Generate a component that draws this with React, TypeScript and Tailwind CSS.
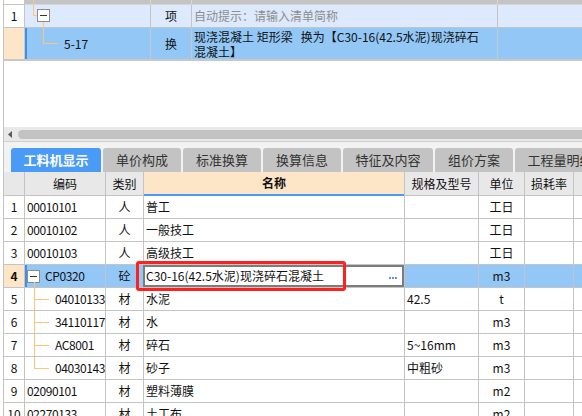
import React from 'react'

const line = 'border-[#c4c4c4]'

function MinusBox() {
  return (
    <span className="flex h-[13px] w-[13px] items-center justify-center border border-[#8c8c8c] bg-white">
      <span className="h-px w-[7px] bg-[#333]"></span>
    </span>
  )
}

type Row = {
  no: string
  code: string
  type: string
  name: string
  spec: string
  unit: string
  level: 0 | 1 | 2
  tree?: 'mid' | 'last'
}

const rows: Row[] = [
  { no: '1', code: '00010101', type: '人', name: '普工', spec: '', unit: '工日', level: 0 },
  { no: '2', code: '00010102', type: '人', name: '一般技工', spec: '', unit: '工日', level: 0 },
  { no: '3', code: '00010103', type: '人', name: '高级技工', spec: '', unit: '工日', level: 0 },
  { no: '4', code: 'CP0320', type: '砼', name: 'C30-16(42.5水泥)现浇碎石混凝土', spec: '', unit: 'm3', level: 1 },
  { no: '5', code: '04010133', type: '材', name: '水泥', spec: '42.5', unit: 't', level: 2, tree: 'mid' },
  { no: '6', code: '34110117', type: '材', name: '水', spec: '', unit: 'm3', level: 2, tree: 'mid' },
  { no: '7', code: 'AC8001', type: '材', name: '碎石', spec: '5~16mm', unit: 'm3', level: 2, tree: 'mid' },
  { no: '8', code: '04030143', type: '材', name: '砂子', spec: '中粗砂', unit: 'm3', level: 2, tree: 'last' },
  { no: '9', code: '02090101', type: '材', name: '塑料薄膜', spec: '', unit: 'm2', level: 0 },
  { no: '10', code: '02270133', type: '材', name: '土工布', spec: '', unit: 'm2', level: 0 },
]

const tabs = [
  { label: '工料机显示', w: 'w-[90px]' },
  { label: '单价构成', w: 'w-[78px]' },
  { label: '标准换算', w: 'w-[78px]' },
  { label: '换算信息', w: 'w-[78px]' },
  { label: '特征及内容', w: 'w-[90px]' },
  { label: '组价方案', w: 'w-[78px]' },
  { label: '工程量明细', w: 'w-[90px]' },
]

const cols = 'grid grid-cols-[21px_81px_38px_260px_75px_46px_49px_1fr]'

export default function App() {
  return (
    <div className="relative h-[416px] w-[582px] overflow-hidden bg-white font-['Noto_Sans_CJK_SC',sans-serif] text-[12px] text-[#111]">
      <div className={`ml-[3px] min-h-[416px] border-l ${line}`}>
        {/* upper grid */}
        <div className="grid grid-cols-[21px_126px_41px_306px_1fr]">
          {/* clipped row above */}
          <div className={`h-[5px] border-r border-b ${line} bg-white`}></div>
          <div className="relative h-[5px] border-r border-b border-[#d6d6d6] bg-[#c4c4c4]">
            <span className="absolute left-[8px] top-0 h-full w-px bg-[#fbc57d]"></span>
          </div>
          <div className="h-[5px] border-r border-b border-[#d6d6d6] bg-[#c4c4c4]"></div>
          <div className="h-[5px] border-r border-b border-[#d6d6d6] bg-[#c4c4c4]"></div>
          <div className="h-[5px] border-b border-[#d6d6d6] bg-[#c4c4c4]"></div>

          {/* row 1 */}
          <div className={`flex h-[23px] items-center justify-center border-r border-b ${line} bg-white`}>1</div>
          <div className={`relative h-[23px] border-r border-b ${line} bg-[#dde9fc]`}>
            <span className="absolute left-[8px] top-0 h-[10px] w-px bg-[#fbc57d]"></span>
            <span className="absolute left-[8px] top-[10px] h-px w-[4px] bg-[#fbc57d]"></span>
            <span className="absolute left-[12px] top-[4px]">
              <MinusBox />
            </span>
            <span className="absolute left-[18px] top-[17px] h-[6px] w-px bg-[#fbc57d]"></span>
          </div>
          <div className={`flex h-[23px] items-center justify-center border-r border-b ${line} bg-[#dde9fc]`}>项</div>
          <div className={`flex h-[23px] items-center border-r border-b ${line} bg-[#dde9fc] pl-[2px] text-[#8e8e8e]`}>
            自动提示：请输入清单简称
          </div>
          <div className={`h-[23px] border-b ${line} bg-[#dde9fc]`}></div>

          {/* row 2 */}
          <div className="h-[33px] border-r border-b-2 border-[#c8c8c8] bg-[#fde6c8]"></div>
          <div className="relative flex h-[33px] items-center border-r border-b-2 border-[#c8c8c8] bg-[#92c7f6] pl-[39px]">
            <span className="absolute left-0 top-0 h-full w-[2px] bg-[#3b8ef2]"></span>
            <span className="absolute left-[18px] top-0 h-[15px] w-px bg-[#fbc57d]"></span>
            <span className="absolute left-[18px] top-[15px] h-px w-[15px] bg-[#fbc57d]"></span>
            5-17
          </div>
          <div className="flex h-[33px] items-center justify-center border-r border-b-2 border-[#c8c8c8] bg-[#92c7f6]">换</div>
          <div className="flex h-[33px] flex-col justify-center border-r border-b-2 border-[#c8c8c8] bg-[#92c7f6] pl-[2px] leading-[15px] whitespace-pre">
            <span>现浇混凝土 矩形梁   换为【C30-16(42.5水泥)现浇碎石</span>
            <span>混凝土】</span>
          </div>
          <div className="h-[33px] border-b-2 border-[#c8c8c8] bg-[#92c7f6]"></div>
        </div>

        {/* empty area */}
        <div className="h-[66px] bg-white"></div>

        {/* horizontal scrollbar */}
        <div className="flex h-[14px] items-center bg-[#e8e8e8] pl-[4px]">
          <svg width="5" height="7" viewBox="0 0 5 7" className="mr-[5px]">
            <path d="M4 0 L0 3.5 L4 7 Z" fill="#5a5a5a" />
          </svg>
          <div className="h-[9px] flex-1 rounded-l-full bg-[#c2c2c2]"></div>
        </div>

        {/* tabs */}
        <div className="flex gap-[2px] border-t border-[#cfcfcf] bg-[#f2f2f2] pl-[7px] pt-[6px]">
          {tabs.map((t, i) => (
            <div
              key={t.label}
              className={`flex h-[24px] shrink-0 items-center justify-center rounded-t-[3px] text-[13px] ${t.w} ${
                i === 0 ? 'bg-[#4a9bf7] font-bold text-white' : 'bg-[#c3c3c3] text-[#333]'
              }`}
            >
              {t.label}
            </div>
          ))}
        </div>

        {/* lower grid */}
        <div className={cols}>
          <div className={`h-[24px] border-r border-b ${line} bg-[#e8e8e8]`}></div>
          <div className={`flex h-[24px] items-center justify-center border-r border-b ${line} bg-[#e8e8e8]`}>编码</div>
          <div className={`flex h-[24px] items-center justify-center border-r border-b ${line} bg-[#e8e8e8]`}>类别</div>
          <div className="flex h-[24px] items-center justify-center border-b-2 border-[#4a9bf7] bg-[#fde6c8] font-bold">名称</div>
          <div className={`flex h-[24px] items-center justify-center border-x border-b ${line} bg-[#e8e8e8]`}>规格及型号</div>
          <div className={`flex h-[24px] items-center justify-center border-r border-b ${line} bg-[#e8e8e8]`}>单位</div>
          <div className={`flex h-[24px] items-center justify-center border-r border-b ${line} bg-[#e8e8e8]`}>损耗率</div>
          <div className={`h-[24px] border-b ${line} bg-[#e8e8e8]`}></div>

          {rows.map((r) => {
            const sel = r.no === '4'
            const bg = sel ? 'bg-[#92c7f6]' : 'bg-white'
            return (
              <React.Fragment key={r.no}>
                <div
                  className={`flex h-[23px] items-center justify-center border-r border-b ${line} ${
                    sel ? 'bg-[#fde6c8] font-bold' : 'bg-white'
                  }`}
                >
                  {r.no}
                </div>
                <div className={`relative flex h-[23px] items-center overflow-hidden border-r border-b ${line} ${bg} tracking-[-0.4px] ${r.level === 2 ? 'pl-[30px]' : 'pl-[2px]'}`}>
                  {sel && <span className="absolute left-0 top-0 h-full w-[2px] bg-[#3b8ef2]"></span>}
                  {r.level === 1 && (
                    <>
                      <span className="mr-[5px]">
                        <MinusBox />
                      </span>
                      <span className="absolute left-[9px] top-[17px] h-[6px] w-px bg-[#fbc57d]"></span>
                    </>
                  )}
                  {r.level === 2 && (
                    <>
                      <span className={`absolute left-[9px] top-0 w-px bg-[#fbc57d] ${r.tree === 'last' ? 'h-[12px]' : 'h-full'}`}></span>
                      <span className="absolute left-[9px] top-[11px] h-px w-[15px] bg-[#fbc57d]"></span>
                    </>
                  )}
                  {r.code}
                </div>
                <div className={`flex h-[23px] items-center justify-center border-r border-b ${line} ${bg}`}>{r.type}</div>
                {sel ? (
                  <div className={`h-[23px] border-b ${line} ${bg}`}>
                    <div className="-ml-px flex h-full items-center justify-between border-2 border-[#7c7c7c] bg-white pl-[1px] pr-[5px]">
                      <span>{r.name}</span>
                      <span className="mt-[4px] flex gap-[1px]">
                        <span className="h-[2px] w-[2px] bg-[#5b93d3]"></span>
                        <span className="h-[2px] w-[2px] bg-[#5b93d3]"></span>
                        <span className="h-[2px] w-[2px] bg-[#5b93d3]"></span>
                      </span>
                    </div>
                  </div>
                ) : (
                  <div className={`flex h-[23px] items-center border-b ${line} ${bg} pl-[2px]`}>{r.name}</div>
                )}
                <div className={`flex h-[23px] items-center border-x border-b ${line} ${bg} pl-[2px]`}>{r.spec}</div>
                <div className={`flex h-[23px] items-center justify-center border-r border-b ${line} ${bg}`}>{r.unit}</div>
                <div className={`h-[23px] border-r border-b ${line} ${bg}`}></div>
                <div className={`h-[23px] border-b ${line} ${bg}`}></div>
              </React.Fragment>
            )
          })}
        </div>
      </div>

      {/* red highlight annotation */}
      <div className="pointer-events-none absolute left-[136px] top-[261px] h-[30px] w-[210px] rounded-[3px] border-[3px] border-[#ff2020]"></div>
    </div>
  )
}
